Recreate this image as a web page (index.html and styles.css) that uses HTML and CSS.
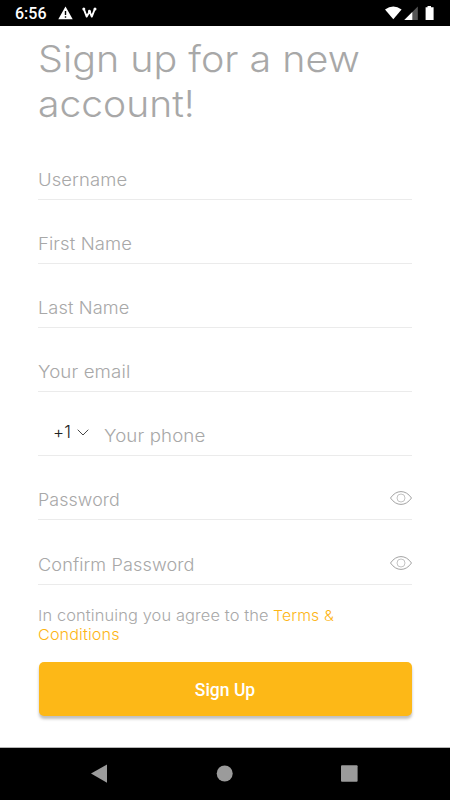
FILE: index.html
```html
<!DOCTYPE html>
<html lang="en">
<head>
<meta charset="utf-8">
<title>Sign up</title>
<link rel="stylesheet" href="styles.css">
</head>
<body>
<header class="status">
  <span class="clock">6:56</span>
  <svg class="warn" width="15" height="14" viewBox="0 0 15 14"><path d="M7.5 .5 14.7 13.3H.3Z" fill="#fff"/><path d="M7.5 5v4M7.5 10.3v1.5" stroke="#000" stroke-width="1.4"/></svg>
  <svg class="wmark" width="15" height="12" viewBox="0 0 15 12"><path d="M1.8 2 4.7 9.6 7.6 4.5 9.8 9.6 12.8 2" fill="none" stroke="#fff" stroke-width="1.9" stroke-linecap="round" stroke-linejoin="round"/><circle cx="1.8" cy="1.9" r="1.5" fill="#fff"/><circle cx="7.4" cy="4.2" r="1.4" fill="#fff"/><circle cx="13" cy="1.9" r="1.5" fill="#fff"/></svg>
  <svg class="signals" width="50" height="15" viewBox="0 0 50 15"><path d="M0 3.4Q8.3-2.6 16.6 3.4L8.3 13.2Z" fill="#fff"/><path d="M32.8.5V14H19.3Z" fill="#555"/><path d="M27.3 6V14H19.3Z" fill="#fff"/><path d="M42.5 0h3.5v1.3h2.6V14H40.6V1.3h1.9Z" fill="#fff"/></svg>
</header>
<main class="form">
  <h1 class="title"><span class="wide title-a">Sign up for a new</span><br><span class="wide title-b">account!</span></h1>
  <div class="fields">
    <div class="field"><span class="wide username">Username</span></div>
    <div class="field"><span class="wide first">First Name</span></div>
    <div class="field"><span class="wide last">Last Name</span></div>
    <div class="field"><span class="wide email">Your email</span></div>
    <div class="field"><span class="code">+1</span><svg class="chevron" width="12" height="7" viewBox="0 0 12 7"><path d="M.7.7 6 6 11.3.7" fill="none" stroke="#333" stroke-width=".9"/></svg><span class="wide phone">Your phone</span></div>
    <div class="field"><span class="wide password">Password</span><svg class="eye" width="22" height="14" viewBox="0 0 22 14"><path d="M.5 7Q5 .6 11 .6T21.5 7Q17 13.4 11 13.4T.5 7Z" fill="none" stroke="#a2a2a2"/><circle cx="11" cy="7" r="4" fill="none" stroke="#c4c4c4"/></svg></div>
    <div class="field"><span class="wide confirm">Confirm Password</span><svg class="eye" width="22" height="14" viewBox="0 0 22 14"><path d="M.5 7Q5 .6 11 .6T21.5 7Q17 13.4 11 13.4T.5 7Z" fill="none" stroke="#a2a2a2"/><circle cx="11" cy="7" r="4" fill="none" stroke="#c4c4c4"/></svg></div>
  </div>
  <p class="terms"><span class="wide agree">In continuing you agree to the</span><a class="wide link">Terms &amp;</a><br><a class="wide link-rest">Conditions</a></p>
  <button class="submit">Sign Up</button>
</main>
<nav class="navbar">
  <svg width="450" height="52" viewBox="0 0 450 52"><g fill="#9b9b9b"><path d="M91 25.5 107 16.5V34.8Z"/><circle cx="224.7" cy="25.5" r="8"/><rect x="341" y="17.2" width="16.6" height="16.6" rx="1"/></g></svg>
</nav>
</body>
</html>
```
FILE: styles.css
```css
* { box-sizing: border-box; }
body { margin: 0; width: 450px; height: 800px; overflow: hidden; display: flex; flex-direction: column; background: #fff; font-family: Inter, "Liberation Sans", sans-serif; font-weight: 300; color: #a8a8a8; }
.status { height: 26px; flex: none; background: #000; color: #fff; display: flex; align-items: center; padding: 0 15px; }
.clock { font: 500 16px/26px Roboto, sans-serif; width: 42px; padding-top: 2px; }
.warn { margin-left: 1px; }
.wmark { margin-left: 9px; }
.signals { margin-left: auto; }
.form { flex: 1; padding: 10px 38px 0; display: flex; flex-direction: column; }
.wide { display: inline-block; transform-origin: left center; }
.title { margin: 0; font-size: 37px; line-height: 45px; font-weight: 300; white-space: nowrap; }
.title-a { transform: scaleX(1.066); }
.title-b { transform: scaleX(1.055); }
.fields { margin-top: 10px; display: flex; flex-direction: column; }
.field { height: 64.15px; border-bottom: 1px solid #ebebeb; display: flex; align-items: flex-end; padding-bottom: 7px; font-size: 17px; line-height: 24px; letter-spacing: .1px; white-space: nowrap; }
.fields .field:first-child { height: 63.7px; }
.username, .first { transform: scaleX(1.085); }
.last { transform: scaleX(1.07); }
.email, .phone { transform: scaleX(1.1); }
.password { transform: scaleX(1.05); }
.confirm { transform: scaleX(1.065); }
.code { margin: 0 6px 4px 15px; width: 18px; color: #222; }
.chevron { margin: 0 15px 12px 0; }
.eye { margin: 0 0 7px auto; }
.terms { margin: 21px 0 0; font-size: 15px; line-height: 19px; white-space: nowrap; letter-spacing: .1px; }
.agree { transform: scaleX(1.094); }
.link, .link-rest { color: #fdb515; }
.link { margin-left: 24.5px; transform: scaleX(1.055); }
.link-rest { transform: scaleX(1.08); }
.submit { margin: 18px 0 0 .5px; width: 373px; height: 54.5px; flex: none; border: 0; border-radius: 5px; background: #fdb817; box-shadow: 0 3px 3px rgba(0,0,0,.25); color: #fff; font: 500 17.5px/54px Roboto, sans-serif; padding: 1px 0 0; }
.navbar { height: 53px; flex: none; background: #000; border-top: 1px solid #b5b5b5; }
.navbar svg { display: block; }
```
